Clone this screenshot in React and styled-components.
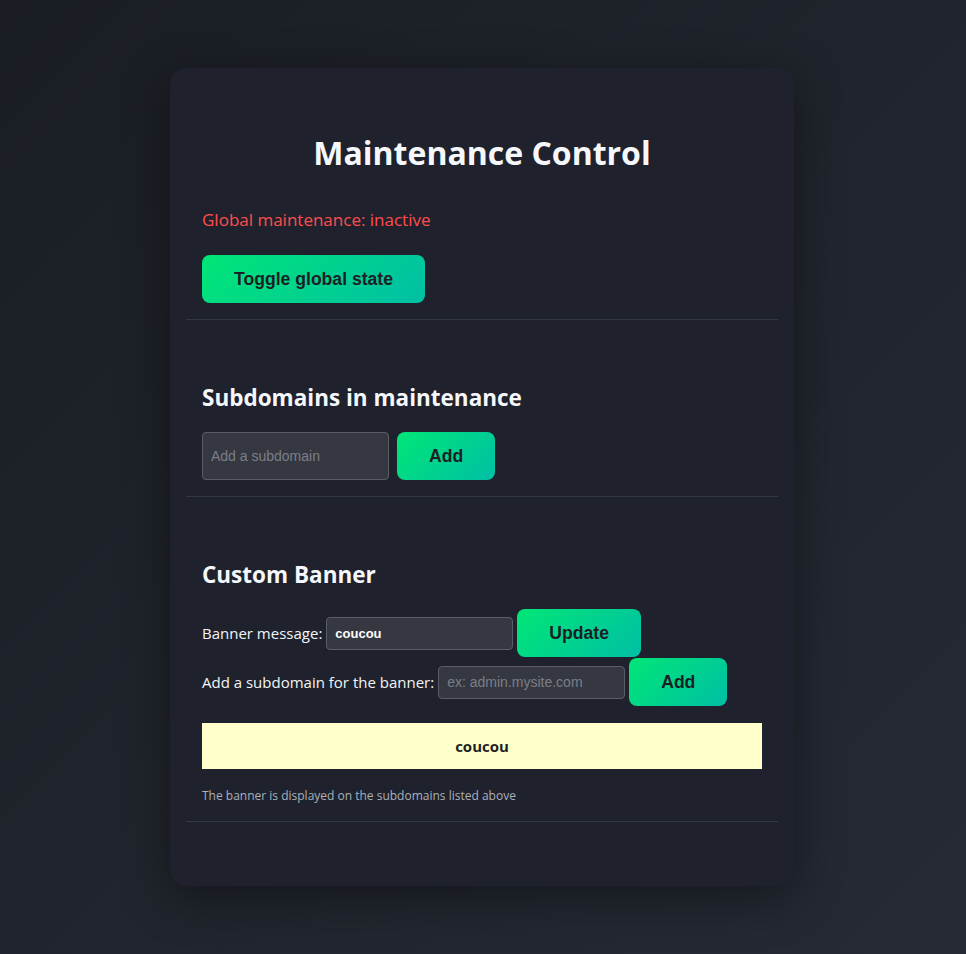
import styled, { createGlobalStyle } from 'styled-components'

const GlobalStyle = createGlobalStyle`
	html, body {
		margin: 0;
		padding: 0;
	}
	body {
		font-family: 'Open Sans', 'Noto Sans', sans-serif;
		background: linear-gradient(135deg, #1a1d24 0%, #20242c 50%, #252a34 100%);
		min-height: 100vh;
		color: #f2f4f8;
	}
`

function App() {
	return (
		<>
			<GlobalStyle />
			<Page>
				<Card>
					<Section>
						<Title>Maintenance Control</Title>
						<Status>Global maintenance: inactive</Status>
						<Button>Toggle global state</Button>
					</Section>

					<Section>
						<Heading>Subdomains in maintenance</Heading>
						<Row gap="8px">
							<Input tall placeholder="Add a subdomain" />
							<Button>Add</Button>
						</Row>
					</Section>

					<Section>
						<Heading>Custom Banner</Heading>
						<Row>
							<Label>Banner message:</Label>
							<Input defaultValue="coucou" bold />
							<Button>Update</Button>
						</Row>
						<Row>
							<Label>Add a subdomain for the banner:</Label>
							<Input placeholder="ex: admin.mysite.com" />
							<Button>Add</Button>
						</Row>
						<Preview>coucou</Preview>
						<Hint>The banner is displayed on the subdomains listed above</Hint>
					</Section>
				</Card>
			</Page>
		</>
	)
}

export default App

const Page = styled.div`
	min-height: 100vh;
	padding-right: 2px;
	box-sizing: border-box;
	display: flex;
	align-items: center;
	justify-content: center;
`

const Card = styled.div`
	width: 624px;
	box-sizing: border-box;
	padding: 32px 16px;
	background: #1f222c;
	border-radius: 16px;
	box-shadow: 0 12px 48px rgba(0, 0, 0, 0.4);
`

const Section = styled.section`
	padding: 16px;
	border-bottom: 1px solid #343842;
	margin-bottom: 32px;
`

const Title = styled.h1`
	margin: 17px 0 0;
	font-size: 32px;
	line-height: 40px;
	font-weight: 700;
	text-align: center;
	color: #f5f7fb;
`

const Status = styled.p`
	margin: 35px 0 0;
	font-size: 17px;
	line-height: 24px;
	color: #ff4d4f;
`

const Heading = styled.h2`
	margin: 14px 0 18px;
	font-size: 22.5px;
	line-height: 32px;
	font-weight: 700;
	color: #f5f7fb;
`

const Button = styled.button`
	height: 48px;
	padding: 0 32px;
	border: none;
	border-radius: 8px;
	background: linear-gradient(135deg, #00e676 0%, #00bfa5 100%);
	color: #1a1f26;
	font-family: 'Liberation Sans', Arial, sans-serif;
	font-size: 17.6px;
	font-weight: 700;
	cursor: pointer;
	flex-shrink: 0;

	section > & {
		margin-top: 23px;
	}
`

const Row = styled.div`
	display: flex;
	align-items: center;
	gap: ${({ gap }) => gap || '4px'};

	& + & {
		margin-top: 1px;
	}
`

const Label = styled.span`
	font-size: 15px;
	color: #f2f4f8;
	white-space: nowrap;
`

const Input = styled.input`
	width: 187px;
	height: ${({ tall }) => (tall ? '48px' : '33px')};
	box-sizing: border-box;
	padding: 0 8px;
	background: #353841;
	border: 1px solid #5a5d65;
	border-radius: 4px;
	color: #ffffff;
	font-family: 'Liberation Sans', Arial, sans-serif;
	font-size: ${({ bold }) => (bold ? '13px' : '14px')};
	font-weight: ${({ bold }) => (bold ? 700 : 400)};
	outline: none;

	&::placeholder {
		color: #7b7e86;
	}
`

const Preview = styled.div`
	margin-top: 17px;
	height: 46px;
	display: flex;
	align-items: center;
	justify-content: center;
	background: #ffffcc;
	color: #1f1f1f;
	font-size: 15px;
	font-weight: 700;
`

const Hint = styled.p`
	margin: 18px 0 0;
	font-size: 12px;
	line-height: 18px;
	color: #aab0bb;
`
